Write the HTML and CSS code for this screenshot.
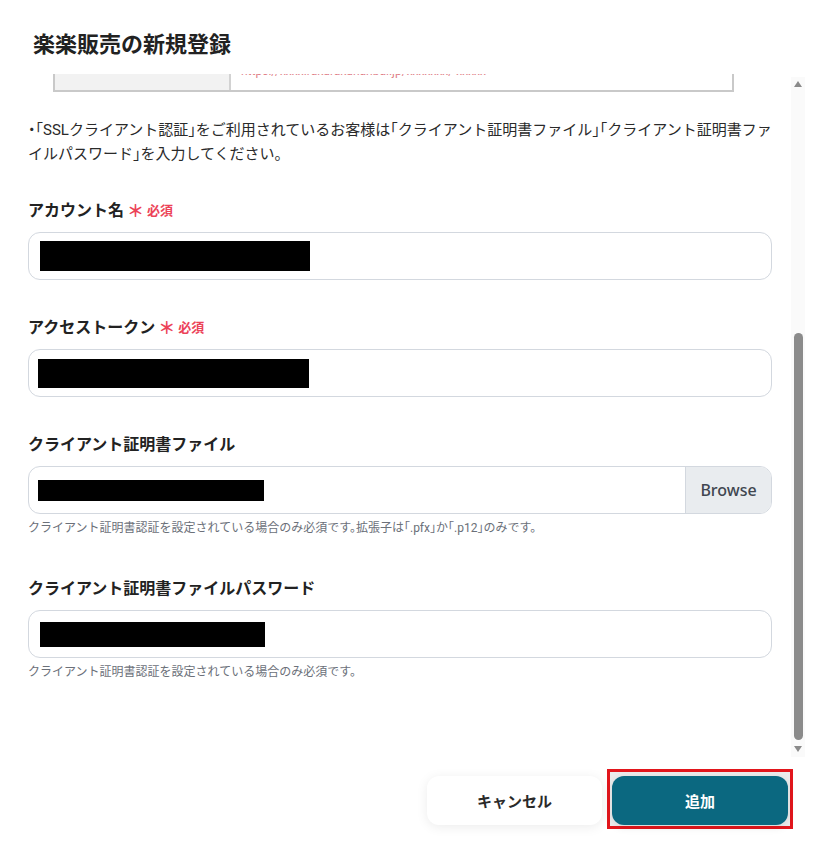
FILE: index.html
```html
<!DOCTYPE html>
<html lang="ja">
<head>
<meta charset="utf-8">
<title>楽楽販売の新規登録</title>
<link rel="stylesheet" href="styles.css">
</head>
<body>
<div class="modal">
  <header class="modal-header">
    <h1 class="title">楽楽販売の新規登録</h1>
  </header>
  <div class="body-row">
    <div class="scroll">
      <div class="frag">
        <div class="frag-key"></div>
        <div class="frag-val"><span class="frag-text">https://xxxx.rakurakuhanbai.jp/xxxxxxx/ xxxxx</span></div>
      </div>
      <p class="note">・「SSLクライアント認証」をご利用されているお客様は「クライアント証明書ファイル」「クライアント証明書ファイルパスワード」を入力してください。</p>

      <div class="field">
        <label class="label">アカウント名<span class="req-mark">＊</span><span class="req">必須</span></label>
        <div class="input"><span class="redact r1"></span></div>
      </div>

      <div class="field">
        <label class="label">アクセストークン<span class="req-mark">＊</span><span class="req">必須</span></label>
        <div class="input"><span class="redact r2"></span></div>
      </div>

      <div class="field with-help">
        <label class="label">クライアント証明書ファイル</label>
        <div class="input file">
          <div class="file-name"><span class="redact r3"></span></div>
          <div class="browse">Browse</div>
        </div>
        <p class="help">クライアント証明書認証を設定されている場合のみ必須です。拡張子は「.pfx」か「.p12」のみです。</p>
      </div>

      <div class="field">
        <label class="label">クライアント証明書ファイルパスワード</label>
        <div class="input"><span class="redact r4"></span></div>
        <p class="help">クライアント証明書認証を設定されている場合のみ必須です。</p>
      </div>
    </div>
    <div class="scrollbar">
      <div class="sb-btn"><span class="tri-up"></span></div>
      <div class="sb-track"><div class="sb-thumb"></div></div>
      <div class="sb-btn down"><span class="tri-down"></span></div>
    </div>
  </div>
  <footer class="footer">
    <button class="btn cancel">キャンセル</button>
    <div class="highlight"><button class="btn primary">追加</button></div>
  </footer>
</div>
</body>
</html>
```
FILE: styles.css
```css
* { box-sizing: border-box; }
html, body { margin: 0; padding: 0; background: #fff; }
body {
  font-family: "Noto Sans", "Noto Sans CJK JP", sans-serif;
  color: #222;
  width: 821px;
  height: 853px;
  overflow: hidden;
}
.modal { display: flex; flex-direction: column; height: 853px; }
.modal-header { height: 74px; padding: 26px 0 0 33px; }
.title {
  margin: 0;
  font-size: 22px;
  line-height: 32px;
  font-weight: 700;
  color: #222;
  font-family: "Noto Sans CJK JP", sans-serif;
}
.body-row { display: flex; height: 683px; }
.scroll {
  width: 791px;
  padding: 0 19px 0 28px;
  overflow: hidden;
  font-family: Roboto, "Noto Sans CJK JP", sans-serif;
}
.frag {
  display: flex;
  width: 681px;
  margin-left: 25px;
  height: 18px;
  border: 2px solid #c9c9c9;
  border-top: none;
}
.frag-key { width: 176px; background: #f2f2f2; border-right: 2px solid #d2d2d2; }
.frag-val {
  flex: 1;
  display: flex;
  align-items: flex-end;
  padding: 0 0 13px 10px;
}
.frag-text {
  color: #e07f88;
  font-size: 12px;
  line-height: 12px;
  white-space: nowrap;
}
.note {
  margin: 26px 0 32px;
  font-size: 15px;
  line-height: 24px;
  color: #2a2a2a;
  width: 744px;
  font-feature-settings: "halt";
}
.field { margin-bottom: 35px; }
.field.with-help { margin-bottom: 40px; }
.label {
  display: flex;
  align-items: center;
  height: 22px;
  font-size: 16px;
  font-weight: 700;
  color: #222;
  margin-bottom: 12px;
}
.req-mark { color: #ec4358; font-size: 17px; font-weight: 700; margin-left: 3px; }
.req { color: #ec4358; font-size: 13px; font-weight: 700; margin-left: 3px; }
.input {
  width: 744px;
  height: 48px;
  border: 1px solid #d3d8df;
  border-radius: 12px;
  display: flex;
  align-items: center;
  padding-left: 11px;
  overflow: hidden;
}
.input.file { padding-left: 0; }
.file-name { flex: 1; display: flex; align-items: center; padding-left: 9px; }
.browse {
  width: 86px;
  height: 100%;
  background: #e9ecef;
  border-left: 1px solid #d3d8df;
  display: flex;
  align-items: center;
  justify-content: center;
  font-family: "Noto Sans", sans-serif;
  font-size: 16px;
  font-weight: 500;
  color: #40464f;
}
.redact { display: block; background: #000; }
.r1 { width: 270px; height: 30px; }
.r2 { width: 271px; height: 29px; margin-left: -2px; }
.r3 { width: 226px; height: 21px; }
.r4 { width: 225px; height: 25px; }
.help {
  margin: 6px 0 0;
  font-size: 12px;
  line-height: 16px;
  color: #6b7079;
  font-feature-settings: "halt";
}
.scrollbar {
  width: 14px;
  margin-top: 3px;
  background: #fafafa;
  display: flex;
  flex-direction: column;
}
.sb-btn { height: 14px; display: flex; justify-content: center; align-items: center; }
.sb-btn.down { height: 16px; }
.tri-up, .tri-down { width: 0; height: 0; border-left: 4px solid transparent; border-right: 4px solid transparent; }
.tri-up { border-bottom: 6px solid #8a8a8a; }
.tri-down { border-top: 6px solid #8a8a8a; }
.sb-track { flex: 1; display: flex; justify-content: center; padding-top: 242px; padding-bottom: 1px; }
.sb-thumb { width: 9px; height: 407px; background: #8b8b8b; border-radius: 5px; }
.footer {
  flex: 1;
  display: flex;
  justify-content: flex-end;
  align-items: flex-start;
  padding: 12px 28px 0 0;
  gap: 5px;
}
.btn {
  font-family: "Noto Sans CJK JP", sans-serif;
  font-size: 15px;
  font-weight: 700;
  border: none;
  border-radius: 12px;
  height: 49px;
  cursor: pointer;
}
.cancel {
  width: 175px;
  margin-top: 7px;
  background: #fff;
  color: #2a2a2a;
  box-shadow: 0 2px 12px rgba(0, 0, 0, 0.08);
}
.highlight {
  border: 3px solid #e2161c;
  padding: 4px 2px 1px 2px;
  background: #ececec;
}
.primary {
  display: block;
  width: 176px;
  background: #0b6880;
  color: #fff;
  box-shadow: 0 2px 8px rgba(0, 0, 0, 0.1);
}
```
